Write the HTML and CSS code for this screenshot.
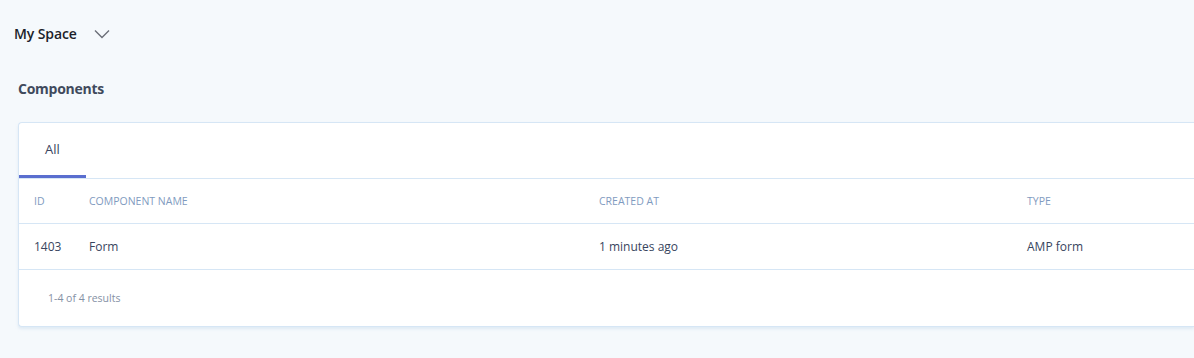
FILE: index.html
```html
<!DOCTYPE html>
<html>
<head>
<meta charset="utf-8">
<link rel="stylesheet" href="styles.css">
</head>
<body>
<div class="page">
  <header class="topbar">
    <span class="space-name">My Space</span>
    <svg class="chevron" width="16" height="10" viewBox="0 0 16 10"><path d="M1 1.5 L8 8.5 L15 1.5" fill="none" stroke="#6b6f78" stroke-width="1.4"/></svg>
  </header>
  <h2 class="section-title">Components</h2>
  <div class="card">
    <div class="tabs">
      <div class="tab active">All</div>
    </div>
    <div class="row head">
      <div>ID</div><div>COMPONENT NAME</div><div>CREATED AT</div><div>TYPE</div>
    </div>
    <div class="row body">
      <div>1403</div><div>Form</div><div>1 minutes ago</div><div>AMP form</div>
    </div>
    <div class="footer">1-4 of 4 results</div>
  </div>
</div>
</body>
</html>
```
FILE: styles.css
```css
html, body { margin: 0; padding: 0; }
body {
  background: #f5f9fc;
  font-family: "Open Sans", "Noto Sans", sans-serif;
  overflow: hidden;
  height: 358px;
}
.page { width: 1194px; }
.topbar {
  display: flex;
  align-items: center;
  height: 66px;
  padding-left: 14px;
  gap: 17px;
}
.space-name {
  font-size: 14px;
  font-weight: 600;
  color: #1c1f2a;
  letter-spacing: -0.1px;
}
.chevron { margin-top: 1px; }
.section-title {
  margin: 0;
  padding-left: 18px;
  font-size: 14px;
  font-weight: 700;
  color: #3f4a5c;
  line-height: 46px;
  height: 56px;
  letter-spacing: -0.25px;
}
.card {
  margin-left: 18px;
  background: #fff;
  border: 1px solid #d6e6f5;
  border-right: none;
  border-radius: 4px 0 0 4px;
  box-shadow: 0 2px 3px rgba(180, 205, 230, 0.35);
}
.tabs {
  display: flex;
  height: 55px;
  border-bottom: 1px solid #d6e6f5;
}
.tab {
  padding: 0 26px 1px;
  display: flex;
  align-items: center;
  font-size: 13px;
  color: #3b4560;
  box-sizing: border-box;
  height: 55px;
}
.tab.active { border-bottom: 3px solid #5a6ecf; }
.row {
  display: grid;
  grid-template-columns: 55px 510px 428px 1fr;
  padding-left: 15px;
  align-items: center;
  border-bottom: 1px solid #d6e6f5;
}
.row.head {
  height: 44px;
  font-size: 10.5px;
  color: #7f9bc0;
}
.row.body {
  height: 46px;
  font-size: 12px;
  color: #38455e;
  padding-bottom: 1px;
  box-sizing: border-box;
}
.footer {
  height: 56px;
  display: flex;
  align-items: center;
  padding-left: 29px;
  font-size: 10.5px;
  color: #8591a5;
}
```
